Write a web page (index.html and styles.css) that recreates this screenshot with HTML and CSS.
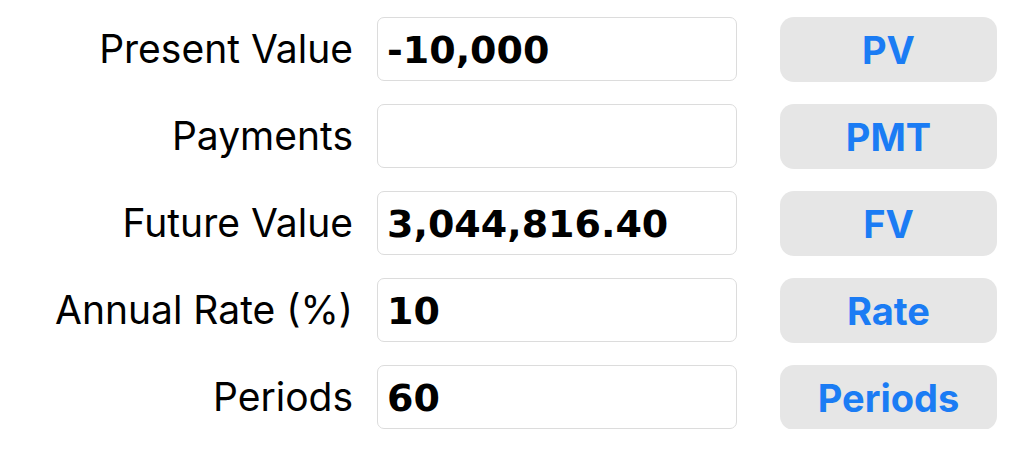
FILE: index.html
```html
<!DOCTYPE html>
<html>
<head>
<meta charset="utf-8">
<link rel="stylesheet" href="styles.css">
</head>
<body>
<div class="form">
  <div class="row">
    <div class="label">Present Value</div>
    <div class="field">-10,000</div>
    <div class="btn">PV</div>
  </div>
  <div class="row">
    <div class="label">Payments</div>
    <div class="field"></div>
    <div class="btn">PMT</div>
  </div>
  <div class="row">
    <div class="label">Future Value</div>
    <div class="field">3,044,816.40</div>
    <div class="btn">FV</div>
  </div>
  <div class="row">
    <div class="label">Annual Rate (%)</div>
    <div class="field">10</div>
    <div class="btn">Rate</div>
  </div>
  <div class="row">
    <div class="label">Periods</div>
    <div class="field">60</div>
    <div class="btn">Periods</div>
  </div>
</div>
</body>
</html>
```
FILE: styles.css
```css
html, body {
  margin: 0;
  padding: 0;
  background: #ffffff;
}
.form {
  display: flex;
  flex-direction: column;
  gap: 23px;
  padding-top: 17px;
}
.row {
  display: flex;
  align-items: center;
  height: 64px;
}
.label {
  width: 353px;
  margin-right: 24px;
  text-align: right;
  font-family: Inter, "Liberation Sans", sans-serif;
  font-size: 39px;
  color: #000;
  line-height: 66px;
}
.field {
  box-sizing: border-box;
  width: 360px;
  height: 64px;
  margin-right: 43px;
  border: 1px solid #dcdcdc;
  border-radius: 7px;
  padding-left: 9px;
  font-family: "DejaVu Sans", sans-serif;
  font-weight: bold;
  font-size: 38px;
  line-height: 64px;
  color: #000;
}
.btn {
  box-sizing: border-box;
  width: 217px;
  height: 65px;
  border-radius: 14px;
  background: #e6e6e6;
  color: #1b7cf4;
  font-family: Inter, "Liberation Sans", sans-serif;
  font-weight: bold;
  font-size: 38px;
  line-height: 66px;
  text-align: center;
}
```
